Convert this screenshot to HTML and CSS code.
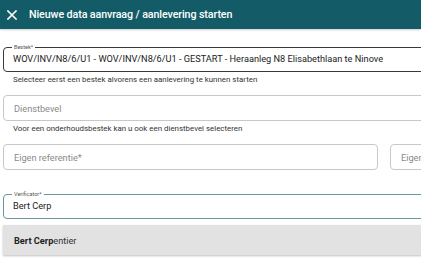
FILE: index.html
```html
<!DOCTYPE html>
<html lang="nl">
<head>
<meta charset="utf-8">
<title>Nieuwe data aanvraag</title>
<link rel="stylesheet" href="styles.css">
</head>
<body>
<header class="topbar">
  <svg class="close" width="10" height="10" viewBox="0 0 10 10"><path d="M1 1L9 9M9 1L1 9" stroke="#fff" stroke-width="1.6" stroke-linecap="square"/></svg>
  <span class="title">Nieuwe data aanvraag / aanlevering starten</span>
</header>
<main class="form">
  <fieldset class="field filled">
    <legend>Bestek*</legend>
    <div class="value">WOV/INV/N8/6/U1 - WOV/INV/N8/6/U1 - GESTART - Heraanleg N8 Elisabethlaan te Ninove</div>
  </fieldset>
  <div class="hint">Selecteer eerst een bestek alvorens een aanlevering te kunnen starten</div>

  <div class="box"><span class="placeholder">Dienstbevel</span></div>
  <div class="hint">Voor een onderhoudsbestek kan u ook een dienstbevel selecteren</div>

  <div class="row">
    <div class="box half"><span class="placeholder">Eigen referentie*</span></div>
    <div class="box rest"><span class="placeholder">Eigen referentie</span></div>
  </div>

  <fieldset class="field focused">
    <legend>Verificator*</legend>
    <div class="value">Bert Cerp</div>
  </fieldset>
  <div class="dropdown">
    <div class="option"><b>Bert Cerp</b>entier</div>
  </div>
</main>
</body>
</html>
```
FILE: styles.css
```css
html, body {
  margin: 0;
  padding: 0;
  background: #ffffff;
  overflow: hidden;
}
body {
  font-family: Roboto, "Liberation Sans", sans-serif;
  color: #212121;
  width: 421px;
  height: 262px;
}
.topbar {
  height: 29px;
  background: #135c67;
  display: flex;
  align-items: center;
  padding-left: 7px;
  gap: 12px;
  box-shadow: 0 1px 2px rgba(0,0,0,0.2);
}
.close { flex: none; }
.title {
  color: #ffffff;
  font-size: 10.7px;
  font-weight: 500;
  letter-spacing: -0.1px;
  white-space: nowrap;
}
.form {
  width: 450px;
  padding: 15px 0 0 3px;
}
.field {
  margin: 0;
  min-width: 0;
  padding: 0 9px;
  border: 1px solid #3a3a3a;
  border-radius: 4px;
  height: 28px;
  box-sizing: border-box;
}
.field legend {
  font-size: 5.5px;
  line-height: 6px;
  color: #555;
  padding: 0 2px;
  margin-left: -1px;
}
.field .value {
  font-size: 9.2px;
  line-height: 12px;
  color: #222;
  padding-top: 3px;
  white-space: nowrap;
}
.hint {
  font-size: 7.9px;
  line-height: 10px;
  color: #333;
  padding: 3px 0 0 10px;
  height: 13px;
  box-sizing: border-box;
  white-space: nowrap;
}
.box {
  height: 26px;
  box-sizing: border-box;
  border: 1px solid #c8c8c8;
  border-radius: 4px;
  display: flex;
  align-items: center;
  padding-left: 10px;
  margin-top: 10px;
  overflow: hidden;
}
.placeholder {
  font-size: 9.2px;
  color: #8a8a8a;
  white-space: nowrap;
}
.row {
  display: flex;
  gap: 12px;
}
.half { width: 375px; flex: none; }
.rest { flex: 1; }
.field.focused {
  margin-top: 21px;
  border-color: #6a979c;
}
.dropdown {
  margin-top: 6px;
  background: #e2e2e2;
  box-shadow: 0 1px 2px rgba(0,0,0,0.25);
}
.option {
  height: 30px;
  display: flex;
  align-items: center;
  padding-left: 11px;
  font-size: 9.2px;
  color: #333;
}
.option b { font-weight: 700; color: #222; }
```
